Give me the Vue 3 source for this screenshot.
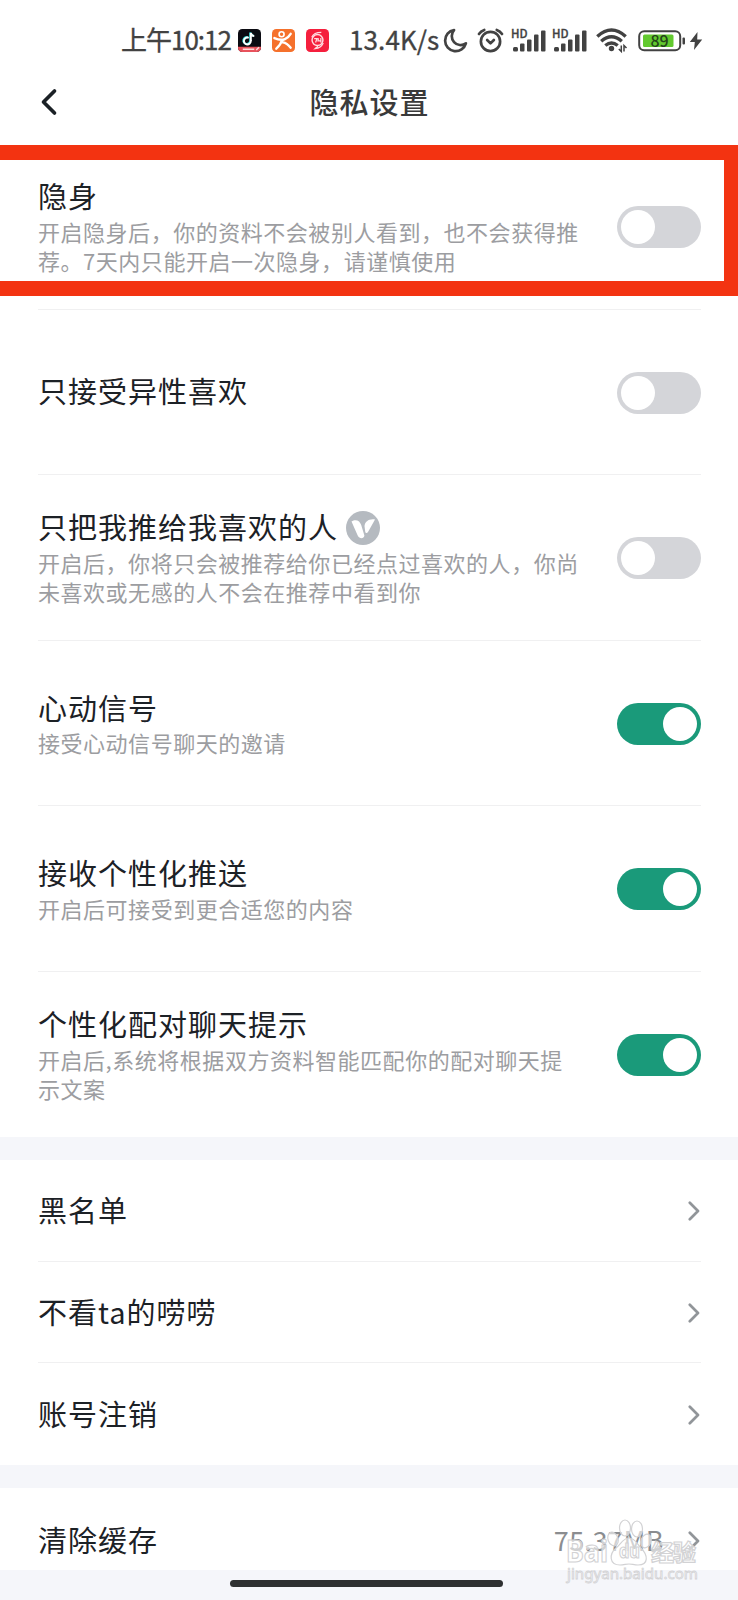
<script setup>
const switches = [
  { title: '隐身', lines: ['开启隐身后，你的资料不会被别人看到，也不会获得推', '荐。7天内只能开启一次隐身，请谨慎使用'], on: false },
  { title: '只接受异性喜欢', lines: [], on: false },
  { title: '只把我推给我喜欢的人', badge: true, lines: ['开启后，你将只会被推荐给你已经点过喜欢的人，你尚', '未喜欢或无感的人不会在推荐中看到你'], on: false },
  { title: '心动信号', lines: ['接受心动信号聊天的邀请'], on: true },
  { title: '接收个性化推送', lines: ['开启后可接受到更合适您的内容'], on: true },
  { title: '个性化配对聊天提示', lines: ['开启后,系统将根据双方资料智能匹配你的配对聊天提', '示文案'], on: true },
]
const links = ['黑名单', '不看ta的唠唠', '账号注销']
</script>

<template>
  <div class="screen">
    <header class="status">
      <span class="time">上午10:12</span>
      <svg class="app" viewBox="0 0 24 24">
        <rect width="24" height="24" rx="4.5" fill="#0b0b12" />
        <path d="M11.2 9.2a3.6 3.6 0 1 0 2.2 3.2V4.2c.5 2 1.7 3 3.6 3.2" fill="none" stroke="#35e3e0" stroke-width="2" transform="translate(-.7 -.5)" />
        <path d="M11.2 9.2a3.6 3.6 0 1 0 2.2 3.2V4.2c.5 2 1.7 3 3.6 3.2" fill="none" stroke="#fff" stroke-width="2" />
        <path d="M0 18.5h24v1a4.5 4.5 0 0 1-4.5 4.5h-15A4.5 4.5 0 0 1 0 19.5z" fill="#e8525c" />
        <path d="M5 21.2h12M19 22l3-3" stroke="#ffd9d9" stroke-width="1.5" />
      </svg>
      <svg class="app" viewBox="0 0 24 24">
        <rect width="24" height="24" rx="4.5" fill="#f5712c" />
        <circle cx="10" cy="5.5" r="2.6" fill="none" stroke="#fff" stroke-width="1.7" />
        <path d="M2.5 9.5c4 1.8 8 2.3 11 1 2.700-1.200 4.500-3 6-5.500M10.500 11.500c-1 3.500-3 6.500-6 9M11.500 14c3 .5 5.500 2.500 8 5.500" fill="none" stroke="#fff" stroke-width="2.500" stroke-linecap="round" />
      </svg>
      <svg class="app" viewBox="0 0 24 24">
        <rect width="24" height="24" rx="4.5" fill="#f51f3d" />
        <circle cx="12" cy="11.5" r="5.7" fill="none" stroke="#ffdce0" stroke-width="1.5" />
        <path d="M6 8.5C7.500 5 11 3.500 16 3.500M18 14.500c-1.500 3.500-4 5.500-8.500 6l3-2.500M8.500 10h3l-1.500 4M13 9.500l-.5 3h3.500m-.5-3v4.500" fill="none" stroke="#ffdce0" stroke-width="1.300" />
      </svg>
      <span class="speed">13.4K/s</span>
      <svg class="moon" viewBox="0 0 26 26"><path d="M11.500 2.200A11 11 0 1 0 23.800 16 9.300 9.300 0 0 1 11.500 2.200z" fill="none" stroke="#424242" stroke-width="2.800" stroke-linejoin="round" /></svg>
      <svg class="alarm" viewBox="0 0 28 26">
        <g fill="none" stroke="#424242" stroke-width="2.800" stroke-linecap="round" stroke-linejoin="round">
          <circle cx="14" cy="14" r="10" /><path d="M10.500 12.500l3.500 3.500 3.500-3.500M2 6.200Q4 3.200 7.500 2M26 6.200Q24 3.200 20.500 2" />
        </g>
      </svg>
      <svg v-for="n in 2" :key="n" class="signal" viewBox="0 0 36 26">
        <text x="0" y="10" class="hd">HD</text>
        <g fill="#424242">
          <rect x="2" y="19" width="5" height="4.500" rx="1.500" /><rect x="9" y="15.500" width="4.500" height="8" rx="1" /><rect x="16" y="11.500" width="4.500" height="12" rx="1" /><rect x="23" y="6.500" width="4.500" height="17" rx="1" /><rect x="30" y="2.500" width="4.500" height="21" rx="1" />
        </g>
      </svg>
      <svg class="wifi" viewBox="0 0 32 26">
        <g fill="none" stroke="#424242" stroke-width="3.400">
          <path d="M1.300 8.500Q15.500-4.500 29.700 8.500M5.200 13.200q10.300-9 20.600 0M9.300 17.500q6.200-5 12.400 0" />
        </g>
        <circle cx="15.500" cy="20.500" r="2.700" fill="#424242" />
        <path d="M25.300 17.500v6l-2.500-2.500M28 23.500v-6l2.500 2.500" fill="none" stroke="#424242" stroke-width="1.500" />
      </svg>
      <svg class="battery" viewBox="0 0 48 22">
        <rect x="1.200" y="1.200" width="41" height="19" rx="5" fill="#fff" stroke="#424242" stroke-width="2" />
        <rect x="5" y="4.500" width="30.500" height="12.500" rx="1.500" fill="#62c92f" />
        <rect x="44.500" y="7.500" width="2.500" height="7" rx="1" fill="#424242" />
        <text x="21.500" y="16.700" class="pct">89</text>
      </svg>
      <svg class="bolt" viewBox="0 0 14 20"><path d="M8.500 1L.8 11h5L5 19l8.200-10.500h-5z" fill="#424242" /></svg>
    </header>

    <nav class="nav">
      <svg class="back" viewBox="0 0 18 28"><path d="M14.500 3L3.500 14l11 11" fill="none" stroke="#1b2126" stroke-width="3.700" stroke-linecap="round" stroke-linejoin="round" /></svg>
      <h1>隐私设置</h1>
    </nav>

    <main>
      <section>
        <div v-for="(s, i) in switches" :key="s.title" class="row tall">
          <div class="copy">
            <div class="title"><span class="label">{{ s.title }}</span>
              <svg v-if="s.badge" class="badge" viewBox="0 0 34 34">
                <circle cx="17" cy="17" r="17" fill="#b5bac0" />
                <path d="M5.500 10.500c4.500-3 8.500-.5 9.700 3.500l3.200 10.500c-.5 3.500-5 3.500-6.700 0z" fill="#fff" />
                <path d="M18.500 15c.5-4.500 4.500-7.500 10.500-6.500l-7 12.500c-1.200 2-2.500 1-2.800-.5z" fill="#fff" />
              </svg>
            </div>
            <div v-for="l in s.lines" :key="l" class="desc">{{ l }}</div>
          </div>
          <span class="switch" :class="{ on: s.on }"><i></i></span>
          <div v-if="i === 0" class="highlight"></div>
        </div>
      </section>
      <div class="band"></div>
      <section>
        <div v-for="t in links" :key="t" class="row short">
          <span class="title">{{ t }}</span>
          <svg class="chevron" viewBox="0 0 12 20"><path d="M1.800 1.800L10 10l-8.200 8.200" /></svg>
        </div>
      </section>
      <div class="band"></div>
      <section class="cache">
        <span class="title">清除缓存</span>
        <span class="size">75.37MB</span>
        <svg class="chevron" viewBox="0 0 12 20"><path d="M1.800 1.800L10 10l-8.200 8.200" /></svg>
      </section>
    </main>
    <footer class="home"><span></span></footer>

    <svg class="watermark" viewBox="0 0 140 70">
      <g fill="#fff" fill-opacity=".6" stroke="#d2d2d4" stroke-width="1.200">
        <ellipse cx="65" cy="13" rx="5.500" ry="8" /><ellipse cx="77" cy="14" rx="5.500" ry="8" />
        <ellipse cx="53" cy="24" rx="5" ry="7" transform="rotate(-20 53 24)" /><ellipse cx="86" cy="26" rx="5" ry="7" transform="rotate(20 86 26)" />
        <path d="M69 23c6 0 8 6 12 10 7 7 8 17-3 17-4 0-6-1-9-1s-5 1-9 1c-11 0-11-11-4-17 5-4 7-10 13-10z" />
        <text x="6" y="47" textLength="42" lengthAdjust="spacingAndGlyphs" class="wm">Bai</text>
        <text x="59" y="43" textLength="21" lengthAdjust="spacingAndGlyphs" class="du">du</text>
        <text x="91" y="46" textLength="45" class="cn">经验</text>
        <text x="7" y="64" textLength="131" lengthAdjust="spacingAndGlyphs" class="url">jingyan.baidu.com</text>
      </g>
    </svg>
  </div>
</template>

<style>
body { margin: 0; background: #fff; }
</style>

<style scoped>
.screen { position: relative; width: 738px; height: 1600px; overflow: hidden; background: #fff; color: #1c2126; font-family: "Noto Sans CJK SC", sans-serif; display: flex; flex-direction: column; }
.status { height: 80px; flex: none; box-sizing: border-box; padding-left: 121px; display: flex; align-items: center; color: #424242; font-size: 26px; line-height: 40px; }
.status svg { flex: none; overflow: visible; }
.status > span { padding-bottom: 2px; -webkit-text-stroke: .35px #424242; }
.time { width: 117px; white-space: nowrap; letter-spacing: -1px; }
.app { width: 23px; height: 23px; margin-right: 11px; }
.speed { width: 93px; margin-left: 9px; white-space: nowrap; letter-spacing: .1px; }
.moon { width: 25px; height: 25px; margin-left: 1px; }
.alarm { width: 27px; height: 25px; margin-left: 9px; }
.signal { width: 36px; height: 26px; margin: 2px 0 0 7px; }
.signal + .signal { margin-left: 5px; }
.hd { font: 500 11.5px "Noto Sans CJK SC", sans-serif; fill: #424242; stroke: #424242; stroke-width: .3; }
.wifi { width: 32px; height: 26px; margin: 2px 0 0 8px; }
.battery { width: 48px; height: 22px; margin: 1px 0 0 10px; }
.pct { font: 500 16px "Noto Sans CJK SC", sans-serif; text-anchor: middle; fill: #24451a; }
.bolt { width: 14px; height: 20px; margin: 1px 0 0 3px; }
.nav { height: 64px; flex: none; display: grid; grid-template-columns: 100px 1fr 100px; }
.back { width: 18px; height: 28px; margin: 8px 0 0 39.5px; }
h1 { margin: 0; padding: 1px 0 0 1px; text-align: center; font-size: 29px; font-weight: 500; letter-spacing: 1px; line-height: 40px; color: #3a3a3a; }
.row { position: relative; box-sizing: border-box; display: flex; align-items: center; justify-content: space-between; margin: 0 37px 0 38px; }
.row:not(:last-child) { border-bottom: 1px solid #f0f0f1; }
.tall { height: 165.5px; }
.short { height: 101.7px; }
.title { font-size: 29px; letter-spacing: 1px; line-height: 40px; white-space: nowrap; }
div.title { display: flex; align-items: center; height: 40px; }
.label, .short .title, .cache .title { padding-bottom: 3px; }
.badge { width: 34px; height: 34px; margin-left: 8px; }
.desc { font-size: 22px; letter-spacing: .53px; line-height: 29.5px; height: 29.5px; white-space: nowrap; color: #9c9da1; }
.switch { flex: none; box-sizing: border-box; width: 84px; height: 42px; margin-top: 2px; padding: 4px; border-radius: 21px; background: #d4d5d9; display: flex; }
.switch i { width: 34px; height: 34px; border-radius: 50%; background: #fff; }
.switch.on { background: #1a9a7a; justify-content: flex-end; }
.highlight { position: absolute; left: -60px; right: -37px; top: 1px; height: 121px; border: 15px solid #f33311; border-right-width: 14px; }
.band { height: 23px; background: #f5f6fa; }
.chevron { width: 12px; height: 20px; margin: 2px 1px 0 0; }
.chevron path { fill: none; stroke: #919599; stroke-width: 2.700; stroke-linecap: round; stroke-linejoin: round; }
.cache { height: 82px; box-sizing: border-box; padding: 31px 37px 0 38px; display: grid; grid-template-columns: 1fr auto 37px; align-items: center; align-content: start; }
.cache .title { margin-bottom: -3px; position: relative; }
.cache .title { padding-bottom: 5px; }
.size { font-size: 27px; letter-spacing: .45px; line-height: 40px; color: #8b8d90; }
.cache .chevron { justify-self: end; }
.home { flex: 1; background: #f5f6fa; display: flex; justify-content: center; align-items: flex-start; }
.home span { width: 273px; height: 7px; margin: 10px 5px 0 0; border-radius: 4px; background: #2e3031; }
.watermark { position: absolute; left: 560px; top: 1515px; width: 140px; height: 70px; }
.wm { font: 700 31px "Noto Sans", sans-serif; }
.du { font: 700 19px "Noto Sans", sans-serif; }
.cn { font: 700 23px "Noto Sans CJK SC", sans-serif; }
.url { font: 400 15px "Noto Sans", sans-serif; stroke-width: .8; }
</style>
